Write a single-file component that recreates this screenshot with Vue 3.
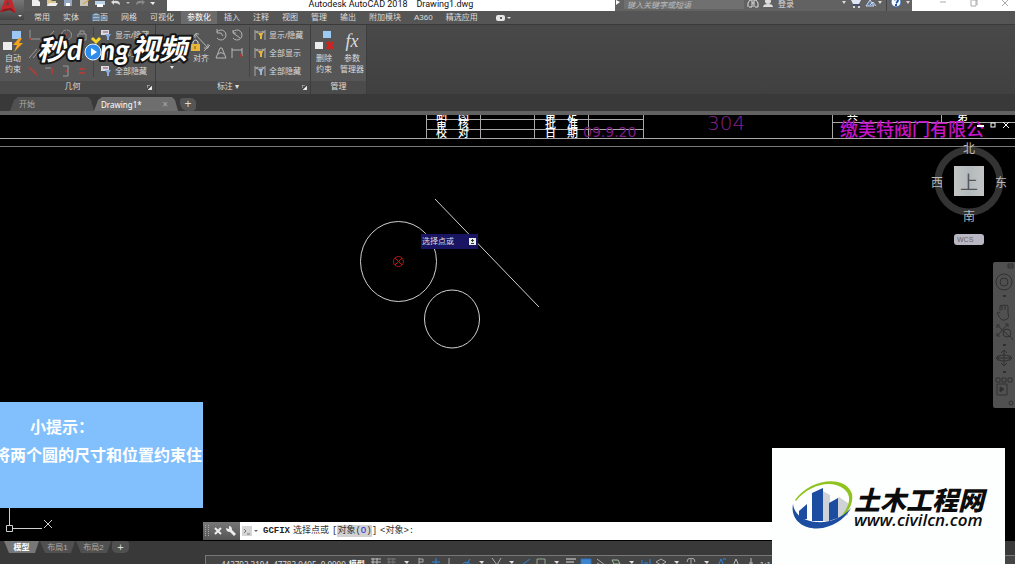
<template>
  <div class="app">
    <header class="top">
      <button class="app-logo" aria-label="应用程序菜单">
        <svg width="24" height="20" viewBox="0 0 24 20">
          <path d="M0 12 L6 -3 H11 L16 13 L11 11 L10 8 L5 9 L4 12 Z" fill="#c3272c" />
          <path d="M6 5 L8 0 L9 5 Z" fill="#4a4a4a" />
          <path d="M0 12 L4 9 L11 8 L16 13 L10 10 Z" fill="#8d1519" />
          <path d="M18 15 h4 l-2 2 z" fill="#ddd" />
        </svg>
      </button>

      <div class="title-bar">
        <div class="quick">
          <button v-for="q in quickTools" :key="q.name" :aria-label="q.name">
            <svg width="12" height="10" viewBox="0 0 12 10">
              <path v-for="(p, i) in q.paths" :key="i" :d="p.d" :fill="p.fill || 'none'" :stroke="p.stroke" />
            </svg>
          </button>
        </div>
        <div class="window-title">Autodesk AutoCAD 2018 &nbsp;&nbsp; Drawing1.dwg</div>
        <div class="info-bar">
          <svg width="6" height="8"><path d="M1 0 L5 2 L1 5 Z" fill="#fff" /></svg>
          <input class="search" type="text" aria-label="搜索" placeholder="键入关键字或短语" />
          <button aria-label="查找">
            <svg width="12" height="8"><path d="M1 7 V3 L3 0 H5 V7 H2 M7 7 V0 H9 L11 3 V7 H8 M5 3 H7" fill="none" stroke="#ddd" /></svg>
          </button>
          <button class="login">
            <svg width="12" height="8"><circle cx="6" cy="1" r="3" fill="#ddd" /><path d="M1 7 Q1 4 6 4 Q11 4 11 7 Z" fill="#ddd" /></svg>
            登录
          </button>
          <span class="spring"></span>
          <svg width="6" height="6"><path d="M1 1 h4 l-2 3 z" fill="#ddd" /></svg>
          <button aria-label="购物车">
            <svg width="12" height="8"><path d="M1 0 H11 L9 4 H3 Z" fill="#dfe5f2" /><path d="M3 5 H10" stroke="#24457d" /><circle cx="4" cy="7" r="1" fill="#fff" /><circle cx="9" cy="7" r="1" fill="#fff" /></svg>
          </button>
          <button aria-label="Exchange">
            <svg width="18" height="8"><path d="M1 6 L5 0 L9 6 Z M5 5 L8 2 L11 6" fill="#5a7cab" stroke="#cbd5e5" /><path d="M13 1 h4 l-2 3 z" fill="#ddd" /></svg>
          </button>
          <i class="bar-line"></i>
          <button aria-label="帮助">
            <svg width="22" height="8"><circle cx="6" cy="2" r="5" fill="#fff" stroke="#3565a8" /><path d="M4 0 Q6 -2 8 0 Q8 2 6 3 M6 4 V6" fill="none" stroke="#2458a5" stroke-width="2" /><path d="M16 1 h4 l-2 3 z" fill="#ddd" /></svg>
          </button>
        </div>
        <div class="window-buttons">
          <button aria-label="最小化"><svg width="8" height="8"><path d="M1 2 H7" stroke="#aaa" /></svg></button>
          <button aria-label="还原"><svg width="8" height="8"><path d="M1 0 V6 H6 V0 M2 0 H7 V5" fill="none" stroke="#aaa" /></svg></button>
          <button aria-label="关闭"><svg width="8" height="8"><path d="M1 0 L7 6 M7 0 L1 6" stroke="#aaa" /></svg></button>
        </div>
      </div>

      <nav class="ribbon-tabs">
        <button
          v-for="tab in tabs"
          :key="tab"
          :class="{ active: tab === activeTab }"
          @click="activeTab = tab"
        >{{ tab }}</button>
        <button class="tab-extra" aria-label="显示选项">
          <svg width="20" height="8"><rect x="5" y="1" width="9" height="6" rx="2" fill="#e6e6e6" /><circle cx="10" cy="4" r="1" fill="#333" /><path d="M16 3 h4 l-2 2 z" fill="#ddd" /></svg>
        </button>
      </nav>

      <div class="ribbon">
        <section class="panel geometry">
          <div class="panel-body">
            <button class="big">
              <svg width="22" height="24" viewBox="0 0 22 24">
                <rect x="10" y="2" width="9" height="8" fill="#9cc7f5" />
                <rect x="1" y="13" width="9" height="8" fill="#ececec" />
                <path d="M17 9 L11 16 H15 L12 23 L21 14 H17 L20 9 Z" fill="#f3a21c" />
              </svg>
              <span>自动</span><span>约束</span>
            </button>
            <div class="icon-grid">
              <button v-for="c in constraints" :key="c.name" :aria-label="c.name">
                <svg width="14" height="14" viewBox="0 0 14 14" fill="none">
                  <path :d="c.grey" stroke="#999" />
                  <path :d="c.red" stroke="#a8403a" stroke-width="2" />
                </svg>
              </button>
            </div>
            <i class="divider"></i>
            <div class="rows">
              <button v-for="r in visibility" :key="r">
                <svg width="12" height="12" viewBox="0 0 12 12">
                  <path d="M1 1 H9 V6 H1 Z" fill="#d6dce6" />
                  <path d="M3 3 H8" stroke="#a54b50" />
                  <path d="M5 5 H11 L9 8 V11 H7 V8 Z" fill="#88afe0" />
                </svg>
                {{ r }}
              </button>
            </div>
          </div>
          <div class="panel-title"><span>几何</span><svg class="launcher" width="5" height="5"><path d="M0 0 H3 M0 0 V3 M5 1 V5 H1 Z" stroke="#ccc" fill="#fff" /></svg></div>
        </section>

        <section class="panel dimension">
          <div class="panel-body">
            <button class="big linear">
              <svg width="22" height="20" viewBox="0 0 22 20">
                <path d="M1 2 V10 M20 2 V10 M1 5 H20 M4 3 L1 5 L4 7 M17 3 L20 5 L17 7" fill="none" stroke="#bbb" />
                <rect x="7" y="11" width="8" height="6" fill="#e8b73a" />
              </svg>
              <span>线性</span>
              <svg width="6" height="8"><path d="M1 2 h4 l-2 3 z" fill="#ddd" /></svg>
            </button>
            <button class="big align">
              <svg width="22" height="20" viewBox="0 0 22 20">
                <path d="M2 5 L7 0 M5 1 L18 15 M14 18 L20 12 M5 5 V1 H9 M18 11 V15 H14" fill="none" stroke="#b5b5b5" />
                <path d="M3 11 V9 Q6 5 8 9 V11" fill="none" stroke="#ddd" />
                <rect x="1" y="11" width="9" height="7" fill="#e8b73a" />
                <path d="M5 13 V16" stroke="#765612" />
              </svg>
              <span>对齐</span>
            </button>
            <div class="icon-grid two">
              <button v-for="d in dimTools" :key="d.name" :aria-label="d.name">
                <svg width="14" height="14" viewBox="0 0 14 14" fill="none">
                  <path :d="d.grey" stroke="#b5b5b5" />
                  <path :d="d.red" stroke="#b8342f" stroke-width="2" />
                </svg>
              </button>
            </div>
            <i class="divider"></i>
            <div class="rows">
              <button v-for="(r, i) in visibility" :key="r">
                <svg width="12" height="12" viewBox="0 0 12 12">
                  <path d="M1 1 V11 M11 1 V11 M1 3 H11 M4 2 L2 3 L4 4 M8 2 L10 3 L8 4" fill="none" stroke="#aaa" />
                  <path d="M4 4 H9 L8 7 V10 H6 V7 Z" :fill="i === 2 ? '#9db7d9' : '#e8b73a'" />
                </svg>
                {{ r }}
              </button>
            </div>
          </div>
          <div class="panel-title"><span>标注 ▾</span><svg class="launcher" width="5" height="5"><path d="M0 0 H3 M0 0 V3 M5 1 V5 H1 Z" stroke="#ccc" fill="#fff" /></svg></div>
        </section>

        <section class="panel manage">
          <div class="panel-body">
            <button class="big">
              <svg width="22" height="24" viewBox="0 0 22 24">
                <rect x="10" y="2" width="8" height="7" fill="#9ccaf5" />
                <rect x="2" y="13" width="8" height="7" fill="#ececec" />
                <path d="M14 13 L20 20 M20 13 L14 20" stroke="#d5211c" stroke-width="3" />
              </svg>
              <span>删除</span><span>约束</span>
            </button>
            <button class="big">
              <span class="fx">fx</span>
              <span>参数</span><span>管理器</span>
            </button>
          </div>
          <div class="panel-title"><span>管理</span></div>
        </section>
      </div>

      <div class="watermark">
        <svg width="160" height="40" viewBox="0 0 160 40">
          <g class="mark">
            <text x="1" y="27">秒</text>
            <text x="31" y="27" class="latin">d</text>
            <text x="64" y="27" class="latin">ng</text>
            <text x="95" y="26">视频</text>
          </g>
          <circle cx="57" cy="19" r="8" fill="#2e8bea" stroke="#e9f3ff" />
          <path d="M55 15 L61 19 L55 23 Z" fill="#fff" />
          <path d="M56 5 L60 9 L64 5" fill="none" stroke="#f5d328" stroke-width="3" />
        </svg>
      </div>
    </header>

    <div class="doc-tabs">
      <button class="doc">开始</button>
      <button class="doc active">Drawing1*<span class="x">×</span></button>
      <button class="plus" aria-label="新图形">+</button>
    </div>

    <main class="canvas">
      <svg class="drawing">
        <g stroke="#a8a8a8">
          <path d="M426.5 0 V23 M480.5 0 V23 M534.5 0 V23 M588.5 0 V23 M643.5 0 V23" />
          <path d="M426 4.5 H643 M426 14.5 H643" />
          <path d="M832.5 0 V23 M941.5 0 V7" />
          <line x1="832" y1="7.5" x2="100%" y2="7.5" />
          <line x1="0" y1="23.5" x2="100%" y2="23.5" />
          <line x1="0" y1="31.5" x2="100%" y2="31.5" stroke="#7a7a7a" />
        </g>
        <g class="block-text">
          <text x="436" y="4">制　图</text>
          <text x="436" y="13">审　核</text>
          <text x="436" y="22">校　对</text>
          <text x="545" y="4">审　定</text>
          <text x="545" y="13">批　准</text>
          <text x="545" y="22">日　期</text>
          <text x="847" y="5">共</text>
          <text x="957" y="5">第</text>
        </g>
        <text x="583" y="22" class="date">09.9.20</text>
        <text x="707" y="15" class="code">304</text>
        <text x="840" y="21" class="company">缴美特阀门有限公</text>
        <g fill="none" stroke="#fff">
          <path d="M977 11 H984" stroke-width="2" />
          <rect x="991" y="8" width="4" height="4" />
          <path d="M1003 7 L1009 13 M1009 7 L1003 13" />
        </g>
        <g fill="none" stroke="#d0d0d0">
          <ellipse cx="398.5" cy="146.5" rx="38" ry="40" />
          <ellipse cx="452" cy="204" rx="27.5" ry="29" />
          <path d="M435 84 L539 192" />
          <path d="M9.5 390 V411 M12 413.5 H42 M6.5 410.5 h6 v6 h-6 z M44 405 L52 413 M52 405 L44 413" />
        </g>
        <g fill="none" stroke="#b31414">
          <circle cx="398.5" cy="146.5" r="5" />
          <path d="M395 143 L402 150 M402 143 L395 150" />
        </g>
      </svg>

      <div class="prompt">
        <span>选择点或</span>
        <svg width="7" height="7"><rect width="7" height="7" fill="#e8efe8" /><path d="M3.5 1 V4 M2 2.5 H5 M2 5.5 H5" fill="none" stroke="#333" /></svg>
      </div>

      <div class="view-cube">
        <svg width="76" height="76"><circle cx="38" cy="38" r="31" fill="none" stroke="#333" stroke-width="7" /></svg>
        <button class="face">上</button>
        <span class="n">北</span>
        <span class="w">西</span>
        <span class="e">东</span>
        <span class="s">南</span>
      </div>
      <button class="wcs">WCS</button>

      <div class="nav-bar">
        <svg width="22" height="146" viewBox="0 0 22 146" fill="none" stroke="#303030">
          <path d="M15 2 h5 v4 h-5 z M15 4 h5" />
          <circle cx="11" cy="20" r="8" /><circle cx="11" cy="20" r="4" />
          <path d="M10 34 h3 M10 83 h3 M10 110 h3" stroke-width="2" />
          <path d="M7 49 V44 Q8 42 9 44 V48 M9 44 Q11 41 12 44 V48 M12 44 Q14 42 15 44 V51 Q17 57 12 58 H9 Q7 57 4 51 Q5 49 7 51" />
          <path d="M4 63 L17 75 M15 62 L4 74 M4 66 V63 H7 M12 62 H15 V65 M4 71 V74 H7" />
          <circle cx="14" cy="71" r="4" /><path d="M17 74 L20 78" />
          <path d="M11 88 V104 M3 96 H19 M6 93 L3 96 L6 99 M16 93 L19 96 L16 99 M8 91 L11 88 L14 91 M8 101 L11 104 L14 101" />
          <ellipse cx="11" cy="96" rx="6" ry="3" />
          <path d="M3 116 h4 v4 h-4 z M9 116 h4 v4 h-4 z M15 116 h4 v4 h-4 z M4 122 h10 v11 h-10 z" />
          <path d="M7 125 L11 127 L7 130 Z" fill="#303030" />
          <circle cx="18" cy="141" r="2" />
        </svg>
      </div>

      <aside class="tip">
        <p class="tip-title">小提示：</p>
        <p class="tip-text">将两个圆的尺寸和位置约束住</p>
      </aside>

      <div class="command">
        <div class="grip">
          <svg width="6" height="16"><path d="M1.5 2 V14 M4.5 2 V14" stroke="#aaa" stroke-dasharray="1 1" /></svg>
          <button aria-label="关闭命令行"><svg width="8" height="8"><path d="M1 1 L7 7 M7 1 L1 7" stroke="#eee" stroke-width="2" /></svg></button>
          <button aria-label="自定义"><svg width="12" height="12"><path d="M1 3 L4 4 L4 1 Q7 1 7 5 L11 9 L9 11 L5 7 Q1 7 1 3 Z" fill="#eee" /></svg></button>
        </div>
        <div class="line">
          <svg width="20" height="12"><rect x="2" y="1" width="10" height="10" fill="#d5d5d5" /><path d="M4 4 L6 6 L4 8 M7 9 H10" fill="none" stroke="#777" /><path d="M14 5 h4 l-2 2 z" fill="#666" /></svg>
          <b>GCFIX</b>
          <span>选择点或</span>
          <span>[<mark>对象(<em>O</em>)</mark>]</span>
          <span>&lt;对象&gt;:</span>
        </div>
      </div>
    </main>

    <div class="layout-tabs">
      <button
        v-for="l in layouts"
        :key="l"
        :class="{ active: l === activeLayout }"
        @click="activeLayout = l"
      >{{ l }}</button>
      <button class="add" aria-label="新建布局">+</button>
    </div>

    <footer class="status">
      <div class="status-inner">
        <span class="coords">443793.3194, 47783.0405, 0.0000</span>
        <b>模型</b>
        <button v-for="s in statusTools" :key="s.name" :aria-label="s.name">
          <svg width="12" height="8" viewBox="0 0 12 8">
            <path :d="s.d" :fill="s.fill || 'none'" :stroke="s.color" />
          </svg>
        </button>
        <span class="scale">1:1 / 100%</span>
      </div>
    </footer>

    <a class="sponsor" href="#" aria-label="土木工程网">
      <svg width="62" height="52" viewBox="0 0 62 52">
        <path d="M19 14 L29 9 L38 14 V40 H29 V15 Z M40 22 L47 16 L56 22 V34 L44 38 Z" fill="#cfd3d8" />
        <path d="M7 30 L15 23 V38 H7 Z M20 12 L31 7 V40 H20 Z M37 22 L46 17 V37 L37 40 Z" fill="#1c4da0" />
        <path d="M3 19 C18 -2 53 -7 60 13 C62 23 55 34 44 41 C58 27 61 15 52 8 C39 -2 17 4 4 20 Z" fill="#8fc31f" />
        <path d="M1 23 C-2 39 12 50 31 47 C45 44 55 35 59 27 C49 38 37 42 24 41 C11 40 2 33 1 23 Z" fill="#1c4da0" />
      </svg>
      <span class="sponsor-text">
        <span class="cn">土木工程网</span>
        <span class="url">www.civilcn.com</span>
      </span>
    </a>
  </div>
</template>

<script setup>
import { ref } from 'vue'

const tabs = ['常用', '实体', '曲面', '网格', '可视化', '参数化', '插入', '注释', '视图', '管理', '输出', '附加模块', 'A360', '精选应用']
const activeTab = ref('参数化')

const layouts = ['模型', '布局1', '布局2']
const activeLayout = ref('模型')

const visibility = ['显示/隐藏', '全部显示', '全部隐藏']

const quickTools = [
  { name: '新建', paths: [{ d: 'M2 0 H8 L10 2 V6 H2 Z', fill: '#eee' }] },
  { name: '打开', paths: [{ d: 'M1 0 H5 L6 1 H10 V6 H1 Z', fill: '#d9c48a' }, { d: 'M1 6 L3 3 H12 L10 6 Z', fill: '#eee' }] },
  { name: '保存', paths: [{ d: 'M2 0 H10 V6 H2 Z', fill: '#93a7c4' }, { d: 'M4 3 H8 V6 H4 Z', fill: '#fff' }] },
  { name: '另存为', paths: [{ d: 'M2 0 H10 V6 H2 Z', fill: '#c9c3b8' }, { d: 'M5 4 L11 0', stroke: '#df9a2d' }] },
  { name: '打印', paths: [{ d: 'M1 1 H11 V5 H1 Z', fill: '#bcd0e8' }, { d: 'M3 4 H9 V7 H3 Z', fill: '#fff' }] },
  { name: '放弃', paths: [{ d: 'M1 2 L4 0 V1 Q10 0 10 5 Q8 3 4 3 V5 Z', fill: '#ddd' }] },
  { name: '放弃列表', paths: [{ d: 'M4 2 h4 l-2 2 z', fill: '#bbb' }] },
  { name: '重做', paths: [{ d: 'M11 2 L8 0 V1 Q2 0 2 5 Q4 3 8 3 V5 Z', fill: '#888' }] },
  { name: '自定义', paths: [{ d: 'M4 2 h5 l-2 3 z', fill: '#eee' }] }
]

const constraints = [
  { name: '重合', grey: 'M3 2 V11 H13', red: 'M2 11 h2' },
  { name: '共线', grey: 'M3 12 L11 3', red: '' },
  { name: '同心', grey: 'M7 2 a5 5 0 1 0 1 0', red: 'M6 7 h2' },
  { name: '固定', grey: 'M3 6 H11 V12 H3 Z M5 6 V3 H9 V6', red: '' },
  { name: '平行', grey: 'M2 12 L10 3 M6 12 L13 4', red: '' },
  { name: '垂直', grey: 'M2 11 L8 3 L12 8', red: '' },
  { name: '水平', grey: 'M2 7 H12', red: '' },
  { name: '竖直', grey: 'M7 2 V12', red: '' },
  { name: '相切', grey: '', red: 'M2 3 L10 11' },
  { name: '平滑', grey: 'M2 4 H8', red: 'M8 4 Q10 4 9 10' },
  { name: '对称', grey: 'M4 2 H9 V12 H4', red: 'M6 7 h2' },
  { name: '相等', grey: '', red: 'M4 5 H10 M4 9 H10' }
]

const dimTools = [
  { name: '半径', grey: 'M3 4 A5 5 0 1 1 3 10 M3 1 V5 H7 L9 8', red: '' },
  { name: '直径', grey: 'M3 4 A5 5 0 1 1 3 10 M3 5 L10 10 M3 2 V5 H6', red: '' },
  { name: '角度', grey: 'M2 12 L6 2 H8 L12 12 Z M4 8 Q7 5 10 8', red: '' },
  { name: '转换', grey: 'M2 12 V2 M2 4 H12 M12 2 V10', red: 'M11 8 v3' }
]

const caret = { d: 'M4 3 h5 l-2 3 z', fill: '#ddd' }

const statusTools = [
  { name: '栅格', d: 'M1 1 H11 M1 4 H11 M1 7 H11 M3 0 V8 M7 0 V8', color: '#bbb' },
  { name: '捕捉', d: 'M2 1 H11 M2 4 H11 M4 0 V8 M8 0 V8', color: '#777' },
  { name: '捕捉列表', ...caret },
  { name: '推断约束', d: 'M4 0 V8 M4 1 H8 V4 H4', color: '#aaa' },
  { name: '动态输入', d: 'M2 4 H10 M6 0 V8', color: '#2f86df' },
  { name: '正交', d: 'M4 0 V7 H11', color: '#aaa' },
  { name: '极轴', d: 'M2 7 A5 5 0 0 1 11 7 M6 7 L10 1', color: '#2f86df' },
  { name: '极轴列表', ...caret },
  { name: '等轴测', d: 'M2 0 L7 7 L11 0', color: '#aaa' },
  { name: '等轴测列表', ...caret },
  { name: '追踪', d: 'M2 7 L10 1', color: '#2f86df' },
  { name: '对象捕捉', d: 'M2 7 V1 H10 V7', color: '#8eab8e' },
  { name: '对象捕捉列表', ...caret },
  { name: '线宽', d: 'M1 1 H11 M1 4 H9 M1 7 H11', color: '#ddd' },
  { name: '透明度', d: 'M1 1 H11 V8 H1 Z', fill: '#3f86ce', color: '#2f73bd' },
  { name: '选择循环', d: 'M2 1 L10 7 M2 5 L8 8', color: '#aaa' },
  { name: '三维捕捉', d: 'M2 2 H8 L10 6 H4 Z', color: '#9fbd9f' },
  { name: '三维捕捉列表', ...caret },
  { name: '动态UCS', d: 'M2 8 V2 M4 5 H8 M10 1 V8', color: '#2f86df' },
  { name: '过滤', d: 'M1 4 L6 1 L11 4 L6 7 Z', color: '#aaa' },
  { name: '过滤列表', ...caret },
  { name: '小控件', d: 'M6 0 V8 M2 4 A4 4 0 0 1 10 4', color: '#aaa' },
  { name: '小控件列表', ...caret },
  { name: '注释可见性', d: 'M3 8 L6 1 L9 8 M8 1 H11', color: '#2f86df' },
  { name: '自动缩放', d: 'M3 8 L6 1 L9 8', color: '#bbb' },
  { name: '注释比例', d: 'M6 0 V8 M4 5 H8', color: '#bbb' }
]
</script>

<style>
body {
  margin: 0;
  background: #000;
}
</style>

<style scoped>
.app {
  position: relative;
  display: flex;
  flex-direction: column;
  height: 100vh;
  overflow: hidden;
  background: #393939;
  color: #ddd;
  font-family: "Liberation Sans", "Noto Sans CJK SC", sans-serif;
  font-size: 8px;
  line-height: 11px;
}

button {
  display: flex;
  align-items: center;
  padding: 0;
  border: none;
  background: transparent;
  color: inherit;
  font: inherit;
  white-space: nowrap;
  cursor: pointer;
}

svg {
  display: block;
  flex: none;
}

.top {
  position: relative;
}

.app-logo {
  position: absolute;
  left: 0;
  top: 0;
  z-index: 2;
  background: linear-gradient(#777, #454545);
}

/* 标题栏 */
.title-bar {
  display: flex;
  height: 11px;
  overflow: hidden;
  background: #5a5a5a;
}

.quick {
  display: flex;
  align-items: flex-start;
  gap: 4px;
  width: 137px;
  padding-left: 30px;
}

.quick button:nth-child(n + 6) {
  margin-right: -4px;
}

.window-title {
  flex: 1;
  background: #fff;
  color: #111;
  font: 9px/8px Roboto, sans-serif;
  text-align: center;
}

.info-bar {
  display: flex;
  align-items: flex-start;
  gap: 3px;
  width: 297px;
  background: #626262;
}

.search {
  width: 120px;
  height: 9px;
  box-sizing: border-box;
  padding: 0 3px;
  border: none;
  background: #707070;
  font: italic 8px/8px "Noto Sans CJK SC", sans-serif;
}

.search::placeholder {
  color: #bbb;
}

.login {
  gap: 4px;
  line-height: 7px;
}

.spring {
  flex: 1;
}

.bar-line {
  width: 1px;
  height: 11px;
  background: #444;
}

.window-buttons {
  display: flex;
  justify-content: space-between;
  align-items: flex-start;
  width: 70px;
  padding: 0 6px 0 27px;
  background: #fff;
}

/* 选项卡 */
.ribbon-tabs {
  display: flex;
  gap: 1px;
  height: 14px;
  padding-left: 28px;
  background: #555;
  border-bottom: 1px solid #3a3a3a;
  box-sizing: border-box;
}

.ribbon-tabs button {
  padding: 0 6px;
}

.ribbon-tabs button.active {
  background: #6b6b6b;
  color: #fff;
}

/* 功能区 */
.ribbon {
  display: flex;
  height: 69px;
  background: linear-gradient(#494949, #404040);
}

.panel {
  display: flex;
  flex-direction: column;
  box-sizing: border-box;
  background: #565656;
  border-right: 1px solid #3d3d3d;
}

.geometry {
  width: 156px;
}

.dimension {
  width: 155px;
}

.manage {
  width: 56px;
}

.panel-body {
  display: flex;
  flex: 1;
}

.panel-title {
  position: relative;
  display: flex;
  justify-content: center;
  height: 13px;
  background: #4b4b4b;
  line-height: 12px;
}

.geometry .panel-title,
.dimension .panel-title {
  padding-right: 10px;
}

.launcher {
  position: absolute;
  right: 3px;
  bottom: 4px;
}

.big {
  flex-direction: column;
  width: 26px;
  padding-top: 4px;
}

.dimension .big {
  padding-top: 8px;
}

.dimension .linear {
  width: 32px;
}

.fx {
  height: 24px;
  color: #ddd;
  font: italic 18px/24px "Liberation Serif", serif;
}

.manage .panel-body {
  gap: 2px;
}

.icon-grid {
  display: grid;
  grid-template-columns: repeat(4, 16px);
  grid-auto-rows: 18px;
  padding: 1px 0 0 1px;
}

.icon-grid.two {
  grid-template-columns: repeat(2, 16px);
  padding: 1px 1px 0 0;
}

.divider {
  width: 1px;
  margin: 2px 4px 4px 2px;
  background: #444;
}

.rows {
  display: flex;
  flex-direction: column;
  padding-top: 1px;
}

.rows button {
  gap: 3px;
  height: 18px;
}

.geometry .rows {
  padding-left: 2px;
}

/* 视频水印 */
.watermark {
  position: absolute;
  left: 36px;
  top: 33px;
  pointer-events: none;
}

.mark text {
  fill: #fff;
  stroke: #151515;
  stroke-width: 4px;
  stroke-linejoin: round;
  paint-order: stroke;
  font: italic 700 28px "Noto Sans CJK SC", sans-serif;
}

.mark .latin {
  font: italic 700 28px Lato, sans-serif;
}

/* 文档标签 */
.doc-tabs {
  display: flex;
  align-items: flex-end;
  height: 17px;
  padding-left: 10px;
  background: #393939;
  border-bottom: 4px solid #626262;
}

.doc {
  width: 84px;
  height: 14px;
  padding-left: 9px;
  background: #505050;
  color: #aaa;
  clip-path: polygon(0 100%, 4px 3px, 8px 0, 78px 0, 81px 3px, 100% 100%);
}

.doc.active {
  justify-content: space-between;
  padding: 0 10px 0 7px;
  background: #6e6e6e;
  color: #fff;
  font: 8px/11px "Noto Sans", sans-serif;
}

.doc .x {
  color: #aaa;
  font-size: 10px;
}

.plus {
  justify-content: center;
  width: 16px;
  height: 13px;
  margin-left: 2px;
  background: #555;
  border-radius: 3px 5px 4px 8px;
  font-size: 12px;
}

/* 绘图区 */
.canvas {
  position: relative;
  flex: 1;
  min-height: 0;
  overflow: hidden;
  background: #000;
}

.drawing {
  width: 100%;
  height: 100%;
}

.block-text text {
  fill: #fff;
  font: 500 11px "Noto Sans CJK SC", sans-serif;
}

.drawing .date {
  fill: #7d1c85;
  font: 14px "DejaVu Sans", sans-serif;
}

.drawing .code {
  fill: #84208c;
  font: 200 20px "DejaVu Sans", sans-serif;
}

.drawing .company {
  fill: #c414c8;
  font: 500 18px "Noto Sans CJK SC", sans-serif;
}

.prompt {
  position: absolute;
  left: 421px;
  top: 119px;
  display: flex;
  align-items: center;
  justify-content: space-between;
  gap: 15px;
  height: 15px;
  padding: 0 2px 0 1px;
  background: #1a1563;
  color: #ddd;
}

.view-cube {
  position: absolute;
  right: 8px;
  top: 28px;
  color: #b8b8b8;
  font: 12px/14px "Noto Sans CJK SC", sans-serif;
}

.view-cube span {
  position: absolute;
}

.face {
  position: absolute;
  left: 23px;
  top: 23px;
  justify-content: center;
  width: 30px;
  height: 30px;
  background: linear-gradient(90deg, #c4c4c4, #b2babc, #c4c4c4);
  color: #555;
  font-size: 18px;
}

.view-cube .n {
  left: 32px;
  top: -2px;
}

.view-cube .w {
  left: 0;
  top: 32px;
}

.view-cube .e {
  right: 0;
  top: 32px;
}

.view-cube .s {
  left: 32px;
  top: 66px;
}

.wcs {
  position: absolute;
  right: 31px;
  top: 119px;
  width: 30px;
  height: 11px;
  padding-left: 3px;
  border-radius: 3px;
  background: #b9b7c3;
  color: #666;
  font-size: 7px;
}

.nav-bar {
  position: absolute;
  right: 0;
  top: 147px;
  background: #505050;
  border-radius: 2px 0 0 2px;
}

.tip {
  position: absolute;
  left: 0;
  bottom: 33px;
  width: 203px;
  height: 106px;
  overflow: hidden;
  background: #82c0fd;
  color: #fff;
  font: 700 16px/28px "Noto Sans CJK SC", sans-serif;
}

.tip p {
  margin: 0;
  white-space: nowrap;
}

.tip-title {
  padding: 10px 0 0 30px;
}

.tip-text {
  display: flex;
  justify-content: flex-end;
  padding-right: 1px;
}

.command {
  position: absolute;
  left: 203px;
  right: 20px;
  bottom: 1px;
  display: flex;
  height: 18px;
  background: #fff;
}

.grip {
  display: flex;
  align-items: center;
  justify-content: space-between;
  width: 33px;
  padding: 0 3px 0 1px;
  background: linear-gradient(#777, #555);
}

.line {
  display: flex;
  align-items: center;
  gap: 3px;
  color: #333;
  font: 9px/18px "Liberation Mono", "Noto Sans CJK SC", monospace;
}

.line b {
  color: #222;
}

.line mark {
  padding: 1px 0;
  background: #d2d2d2;
  color: #333;
}

.line em {
  color: #2323d0;
  font-style: normal;
}

/* 布局标签 */
.layout-tabs {
  display: flex;
  height: 14px;
  padding-left: 4px;
}

.layout-tabs button {
  justify-content: center;
  width: 35px;
  height: 12px;
  margin-right: 1px;
  background: #505050;
  color: #aaa;
  clip-path: polygon(0 0, 100% 0, 31px 100%, 5px 100%);
}

.layout-tabs button.active {
  background: #777;
  color: #fff;
  font-weight: bold;
}

.layout-tabs .add {
  width: 17px;
  font-size: 11px;
  color: #ddd;
  clip-path: none;
  border-radius: 2px 3px 5px 5px;
}

/* 状态栏 */
.status {
  height: 9px;
  padding-left: 205px;
  overflow: hidden;
}

.status-inner {
  display: flex;
  align-items: flex-start;
  gap: 3px;
  height: 18px;
  border-top: 1px solid #777;
  border-left: 1px solid #777;
  background: #454545;
  white-space: nowrap;
}

.status-inner button {
  margin-top: 2px;
}

.coords {
  padding: 3px 0 0 15px;
  font-family: "Noto Sans", sans-serif;
}

.status-inner b {
  padding: 3px 2px 0 0;
  color: #fff;
}

.scale {
  padding-top: 3px;
}

/* 右下角站点标识 */
.sponsor {
  position: absolute;
  right: 10px;
  bottom: 0;
  display: flex;
  align-items: flex-start;
  box-sizing: border-box;
  width: 233px;
  height: 116px;
  padding: 33px 0 0 20px;
  background: #fdfefe;
  color: #0c0c0c;
  text-decoration: none;
}

.sponsor-text {
  display: flex;
  flex-direction: column;
  padding-top: 6px;
}

.cn {
  font: italic 900 26px/24px "Noto Sans CJK SC", sans-serif;
}

.url {
  font: italic 600 17px/18px "Open Sans", sans-serif;
}
</style>
